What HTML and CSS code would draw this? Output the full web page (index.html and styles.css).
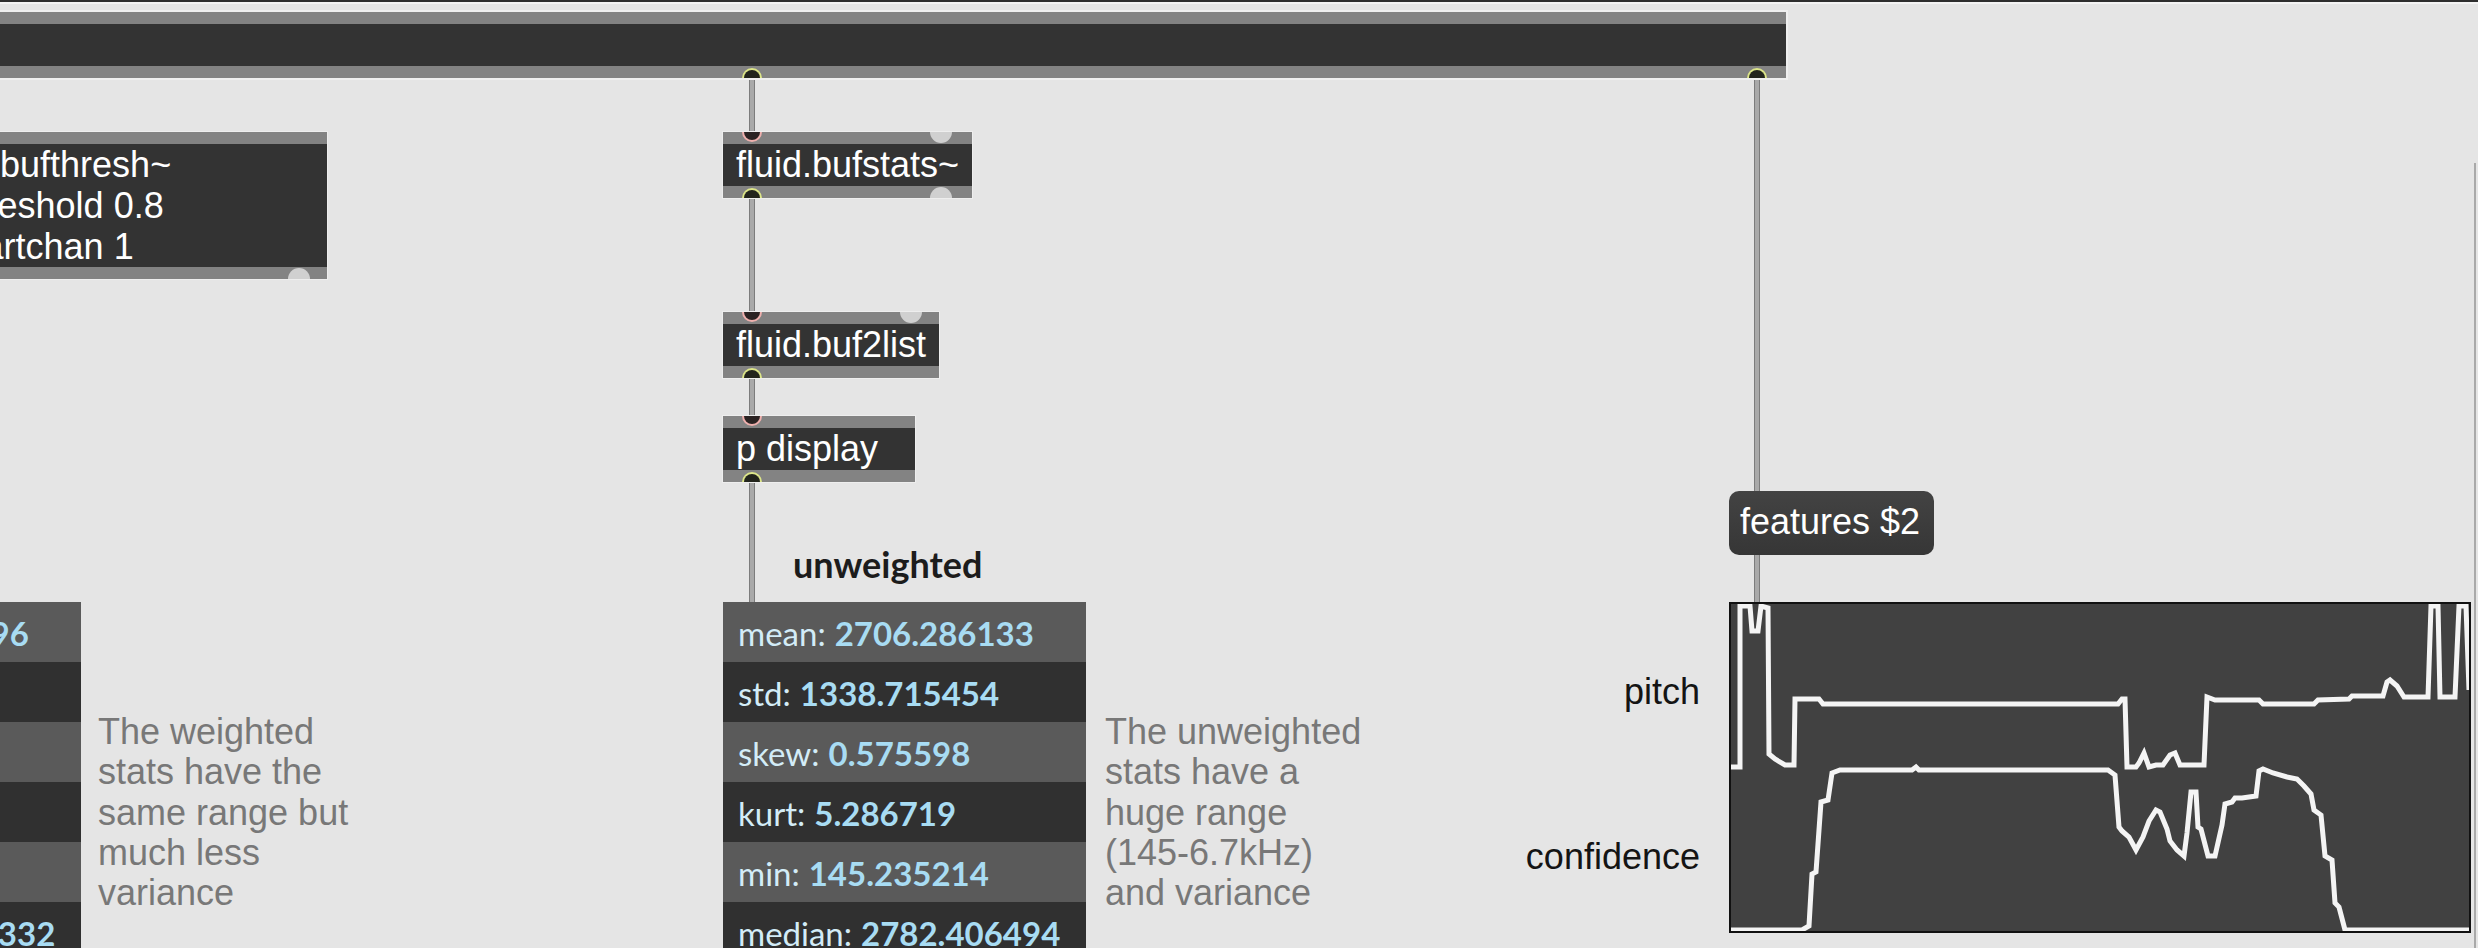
FILE: index.html
```html
<!DOCTYPE html>
<html>
<head>
<meta charset="utf-8">
<title>fluid.bufstats~ weighting</title>
<link rel="stylesheet" href="styles.css">
</head>
<body>
<div class="patcher">
  <div class="winline"></div>

  <!-- patch cords (drawn under the boxes) -->
  <div class="cable cable-a"></div>
  <div class="cable cable-b"></div>
  <div class="cable cable-c"></div>
  <div class="cable cable-d"></div>
  <div class="cable cable-e"></div>

  <!-- top object -->
  <div class="obj topbar">
    <div class="txt"></div>
    <span class="port out live tb-o1"></span>
    <span class="port out live tb-o2"></span>
  </div>

  <div class="obj bufthresh">
    <div class="txt multi">fluid.bufthresh~<br><span class="at">@</span>threshold 0.8<br><span class="at">@</span>startchan 1</div>
    <span class="port out idle bt-o1"></span>
  </div>

  <div class="obj bufstats">
    <div class="txt">fluid.bufstats~</div>
    <span class="port in live p-left"></span>
    <span class="port in idle bs-i2"></span>
    <span class="port out live p-left"></span>
    <span class="port out idle bs-o2"></span>
  </div>

  <div class="obj buf2list">
    <div class="txt">fluid.buf2list</div>
    <span class="port in live p-left"></span>
    <span class="port in idle bl-i2"></span>
    <span class="port out live p-left"></span>
  </div>

  <div class="obj pdisplay">
    <div class="txt">p display</div>
    <span class="port in live p-left"></span>
    <span class="port out live p-left"></span>
  </div>

  <div class="heading unweighted">unweighted</div>

  <div class="stats stats-weighted">
    <div class="row"><span class="k">mean:</span><span class="v">2698.415496</span></div>
    <div class="row"><span class="k">std:</span><span class="v">796.384217</span></div>
    <div class="row"><span class="k">skew:</span><span class="v">0.412876</span></div>
    <div class="row"><span class="k">kurt:</span><span class="v">3.961234</span></div>
    <div class="row"><span class="k">min:</span><span class="v">145.235214</span></div>
    <div class="row"><span class="k">median:</span><span class="v">2751.093332</span></div>
  </div>

  <div class="stats stats-unweighted">
    <div class="row"><span class="k">mean:</span><span class="v">2706.286133</span></div>
    <div class="row"><span class="k">std:</span><span class="v">1338.715454</span></div>
    <div class="row"><span class="k">skew:</span><span class="v">0.575598</span></div>
    <div class="row"><span class="k">kurt:</span><span class="v">5.286719</span></div>
    <div class="row"><span class="k">min:</span><span class="v">145.235214</span></div>
    <div class="row"><span class="k">median:</span><span class="v">2782.406494</span></div>
  </div>

  <div class="comment c-weighted">The weighted<br>stats have the<br>same range but<br>much less<br>variance</div>
  <div class="comment c-unweighted">The unweighted<br>stats have a<br>huge range<br>(145-6.7kHz)<br>and variance</div>

  <div class="msg features">features $2</div>

  <div class="plotlabel pitch">pitch</div>
  <div class="plotlabel confidence">confidence</div>

  <div class="plot">
    <svg class="plot-svg" viewBox="2 2 738 327" width="738" height="327" preserveAspectRatio="none">
      <polyline class="trace" points="0,165 11,165 11,4 21,4 23,29 29,29 32,4 39,6 40,152 46,157 56,163 65,163 66,97 90,97 94,102 389,102 393,97 396,97 398,165 407,165 410,161 415,151 420,165 427,163 434,163 441,153 446,151 451,163 475,163 478,95 486,98 530,98 534,102 585,102 589,98 620,97 623,94 654,94 658,80 661,78 668,84 675,95 699,95 702,4 709,4 711,95 726,95 730,4 737,4 740,88"/>
      <polyline class="trace" points="0,328 73,328 80,324 83,272 87,270 92,200 99,198 103,171 111,168 183,168 187,165 190,168 379,168 386,173 390,225 393,229 400,235 407,248 414,235 420,219 427,208 431,210 438,227 441,239 448,248 455,254 458,231 462,190 467,190 469,225 472,227 479,254 486,254 493,223 496,202 503,200 506,196 513,196 527,194 530,169 534,167 544,171 558,175 568,177 575,184 582,192 585,208 592,213 596,254 603,258 606,301 610,305 616,328 742,328"/>
    </svg>
  </div>

  <div class="edge-line"></div>
</div>
</body>
</html>
```

FILE: styles.css
```css
html, body {
  margin: 0;
  padding: 0;
  background: #e5e5e5;
}

.patcher {
  position: relative;
  width: 2478px;
  height: 948px;
  overflow: hidden;
  background: #e5e5e5;
  font-family: "Liberation Sans", Arial, sans-serif;
}

.winline {
  height: 2px;
  background: #2e2e2e;
  border-bottom: 2px solid #f3f3f3;
}

/* ---------- object boxes ---------- */
.obj {
  position: absolute;
  box-sizing: border-box;
  padding: 12px 0;
  background: #838383;
  box-shadow: 0 0 0 1px #eeeeee;
}

.obj .txt {
  height: 42px;
  background: #333333;
  color: #ffffff;
  font-size: 36px;
  line-height: 41px;
  padding-left: 13px;
  white-space: nowrap;
}

.obj .txt.multi {
  height: 123px;
}

/* Helvetica's narrower "@" glyph */
.obj .at {
  letter-spacing: -5px;
}

.topbar {
  left: -200px;
  top: 12px;
  width: 1986px;
  box-shadow: 0 0 0 2px #efefef;
}

.bufthresh { left: -89px; top: 132px; width: 416px; }
.bufstats  { left: 723px; top: 132px; width: 249px; }
.buf2list  { left: 723px; top: 312px; width: 216px; }
.pdisplay  { left: 723px; top: 416px; width: 192px; }

/* ---------- inlets / outlets ---------- */
.port {
  position: absolute;
  box-sizing: border-box;
  width: 20px;
  height: 10px;
}

.port.in  { top: 0; border-radius: 0 0 10px 10px; }
.port.out { bottom: 0; border-radius: 10px 10px 0 0; }

.port.in.live  { background: #2a2222; border: 2px solid #efb0ae; border-top: none; }
.port.out.live { background: #22241c; border: 2px solid #dde689; border-bottom: none; }

.port.idle {
  width: 22px;
  height: 11px;
  background: #d0d0d0;
}
.port.in.idle  { border-radius: 0 0 11px 11px; }
.port.out.idle { border-radius: 11px 11px 0 0; }

.p-left { left: 19px; }
.tb-o1  { left: 942px; }
.tb-o2  { left: 1947px; }
.bt-o1  { left: 377px; }
.bs-i2, .bs-o2 { left: 207px; }
.bl-i2  { left: 177px; }

/* ---------- patch cords ---------- */
.cable {
  position: absolute;
  width: 4px;
  background: #a9a9a9;
  border-left: 1px solid #7c7c7c;
  border-right: 1px solid #7c7c7c;
}
.cable-a { left: 749px; top: 74px;  height: 62px; }
.cable-b { left: 749px; top: 194px; height: 122px; }
.cable-c { left: 749px; top: 374px; height: 46px; }
.cable-d { left: 749px; top: 478px; height: 126px; }
.cable-e { left: 1754px; top: 74px; height: 530px; }

/* ---------- stats display ---------- */
.heading {
  position: absolute;
  font-family: Lato, "Liberation Sans", sans-serif;
  font-weight: 700;
  font-size: 36px;
  line-height: 44px;
  color: #1c1c1c;
}
.unweighted { left: 793px; top: 542px; }

.stats {
  position: absolute;
  top: 602px;
  width: 363px;
  font-family: Lato, "Liberation Sans", sans-serif;
  font-size: 33px;
}
.stats-unweighted { left: 723px; }
.stats-weighted   { left: -282px; }

.stats .row {
  height: 60px;
  display: flex;
  align-items: center;
  gap: 9px;
  padding-left: 15px;
  padding-top: 1px;
  box-sizing: border-box;
  white-space: nowrap;
}
.stats .row:nth-child(odd)  { background: #5a5a5a; }
.stats .row:nth-child(even) { background: #303030; }

.stats .k { color: #d3ecf7; }
.stats .v { color: #a8dcf3; font-weight: 700; }

/* ---------- comments ---------- */
.comment {
  position: absolute;
  top: 712px;
  font-size: 36px;
  line-height: 40.3px;
  color: #787878;
  white-space: nowrap;
}
.c-weighted   { left: 98px; }
.c-unweighted { left: 1105px; }

/* ---------- message box ---------- */
.msg {
  position: absolute;
  box-sizing: border-box;
  height: 64px;
  padding: 0 11px;
  border-radius: 10px;
  background: linear-gradient(#434343, #363636);
  color: #ffffff;
  font-size: 36px;
  line-height: 61px;
  white-space: nowrap;
}
.features { left: 1729px; top: 491px; width: 205px; }

/* ---------- plot ---------- */
.plotlabel {
  position: absolute;
  left: 1400px;
  width: 300px;
  text-align: right;
  font-size: 36px;
  line-height: 40px;
  color: #141414;
}
.pitch      { top: 672px; }
.confidence { top: 837px; }

.plot {
  position: absolute;
  left: 1729px;
  top: 602px;
  width: 742px;
  height: 331px;
  box-sizing: border-box;
  border: 2px solid #111111;
  background: #414141;
  overflow: hidden;
}

.plot-svg { display: block; }

.trace {
  fill: none;
  stroke: #f4f4f4;
  stroke-width: 5;
  stroke-linejoin: miter;
}

.edge-line {
  position: absolute;
  left: 2474px;
  top: 163px;
  width: 2px;
  height: 785px;
  background: #a9a9a9;
}
```
